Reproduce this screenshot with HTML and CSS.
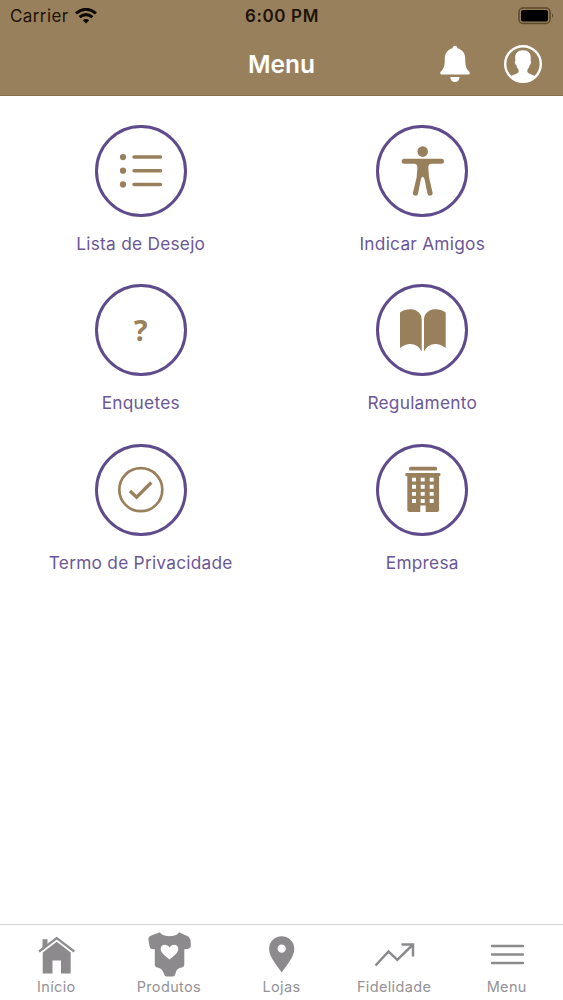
FILE: index.html
```html
<!DOCTYPE html>
<html lang="pt-BR">
<head>
  <meta charset="UTF-8" />
  <meta name="viewport" content="width=device-width, initial-scale=1.0"/>
  <title>Menu</title>
  <link rel="stylesheet" href="styles.css">
</head>
<body>
  <div id="container">
    <header class="header">
      <div class="status">
        <div class="carrier">
          <span>Carrier</span>
          <svg width="22" height="16" viewBox="0 0 22 16" fill="none" stroke="#0c0804" stroke-width="3">
            <path d="M1 5.3 Q11 -2.7 21 5.3" />
            <path d="M4.6 9.2 Q11 4 17.4 9.2" />
            <path d="M7.8 12.3 Q11 9.8 14.2 12.3 L11 15.5Z" fill="#0c0804" stroke="none" />
          </svg>
        </div>
        <span class="time">6:00 PM</span>
        <svg class="battery" width="37" height="18" viewBox="0 0 37 18">
          <rect x="1" y="1" width="31" height="15.5" rx="4" fill="none" stroke="#5b482a" stroke-width="1.5" />
          <rect x="3" y="3" width="27" height="11.5" rx="2" fill="#000" />
          <path d="M34 6.5 Q36.5 8.7 34 11Z" fill="#5b482a" />
        </svg>
      </div>
      <div class="title_bar">
        <h1>Menu</h1>
        <div class="actions">
          <svg width="30" height="38" viewBox="0 0 30 38" fill="#fff">
            <path d="M15 .8c1.5 0 2.4 1 2.4 2.4 5 1.3 7.8 5.2 7.8 10.3 0 7.5.9 10.3 4.1 13.2.9.9.5 2.7-1 2.7H1.7c-1.5 0-1.9-1.8-1-2.7 3.2-2.9 4.1-5.7 4.1-13.2 0-5.1 2.8-9 7.8-10.3C12.6 1.8 13.5.8 15 .8z" />
            <path d="M10.3 32h9.2c0 3-1.9 5-4.6 5s-4.6-2-4.6-5z" />
          </svg>
          <svg width="38" height="38" viewBox="0 0 38 38">
            <circle cx="19" cy="19" r="17.8" fill="none" stroke="#fff" stroke-width="2.4" />
            <path d="M19 5.2c5.2 0 8.200 3 7.8 8.500l-.2 2c.9.3.5 3.7-.9 4.300-.4 2.200-1.300 3.500-2.300 4.500v2.500c1.200 2 4.800 2.300 8.100 4.300C28.600 34.800 24 37 19 37S9.400 34.800 6.500 31.300c3.300-2 6.900-2.300 8.100-4.300v-2.500c-1-1-1.900-2.300-2.300-4.500-1.400-.6-1.800-4-.9-4.300l-.2-2c-.4-5.500 2.600-8.500 7.800-8.500z" fill="#fff" />
          </svg>
        </div>
      </div>
    </header>

    <main class="menu">
      <div class="item">
        <div class="circle">
          <svg viewBox="3 3 86 86" stroke="#99805c" stroke-width="3.5" stroke-linecap="round">
            <path d="M39 32.1H65.500M39 45.700H65.500M39 59.400H65.500" />
            <g fill="#99805c" stroke="none">
              <circle cx="28" cy="32.1" r="3.1" />
              <circle cx="28" cy="45.7" r="3.1" />
              <circle cx="28" cy="59.4" r="3.1" />
            </g>
          </svg>
        </div>
        <p>Lista de Desejo</p>
      </div>
      <div class="item">
        <div class="circle">
          <svg viewBox="3 3 86 86" fill="#99805c">
            <circle cx="46.700" cy="26.600" r="5.300" />
            <path d="M28.200 33.700H65.500a2.500 2.500 0 0 1 0 5H55.500Q52.300 39 52.300 42.500L53 52 56.500 67.500a2.500 2.500 0 0 1-5 1.200L48.500 54Q46.700 49.500 45 54L42 68.700a2.500 2.500 0 0 1-5-1.200L40.700 52 41.400 42.500Q41.400 39 38 38.700H28.200a2.500 2.500 0 0 1 0-5z" />
          </svg>
        </div>
        <p>Indicar Amigos</p>
      </div>
      <div class="item">
        <div class="circle"><b>?</b></div>
        <p>Enquetes</p>
      </div>
      <div class="item">
        <div class="circle">
          <svg viewBox="3 3 86 86" fill="#99805c">
            <path d="M24 64V28.500C29 24.700 36 24.600 40 26.500Q45.700 29.500 45.700 35V67.500C42 59.500 32.500 57 24 64z" />
            <path d="M69.700 64V28.500C64.700 24.700 57.700 24.600 53.700 26.500Q48 29.500 48 35V67.500C51.700 59.500 61.200 57 69.700 64z" />
          </svg>
        </div>
        <p>Regulamento</p>
      </div>
      <div class="item">
        <div class="circle">
          <svg viewBox="3 3 86 86" fill="none" stroke="#99805c">
            <circle cx="45.8" cy="45.7" r="21.5" stroke-width="2.7" />
            <path d="M35 47L41.600 53.200 56.300 38.500" stroke-width="3.3" />
          </svg>
        </div>
        <p>Termo de Privacidade</p>
      </div>
      <div class="item">
        <div class="circle">
          <svg viewBox="3 3 86 86" fill="#99805c">
            <rect x="33" y="22.700" width="28.200" height="3.900" rx="1.700" />
            <path d="M30.500 29h32.300a1.600 1.600 0 0 1 .3 3.200V66a2 2 0 0 1-2 2H49.700v-6.500h-5.400V68H33.300a2 2 0 0 1-2-2V32.200A1.600 1.600 0 0 1 30.500 29z" />
            <path d="M38 33.700v26M46.700 33.700v26M55.700 33.700v26" stroke="#fff" stroke-width="4" stroke-dasharray="3.9 3.2" />
          </svg>
        </div>
        <p>Empresa</p>
      </div>
    </main>

    <nav class="tabs">
      <div class="tab">
        <svg width="38" height="46" viewBox="0 1 38 46" fill="#8c8a8d">
          <path d="M5.500 19.500V8.200h5v6.300z" />
          <path d="M2 20.500L19.700 7.200 37.300 20.500" fill="none" stroke="#8c8a8d" stroke-width="2.2" />
          <path d="M5.700 21.500L19.700 10.700 33.700 21.500V42.500H24V29.500H15.500V42.500H5.700z" />
        </svg>
        <span>Início</span>
      </div>
      <div class="tab">
        <svg width="44" height="46" viewBox="-.5 1 44 46">
          <path d="M12.500 1.300C15 6.500 29 6.500 31.500 1.300L38 4.200Q42 5.500 43 9L43.300 14.500Q43.300 17.500 40 18L36.800 18.200V33.500Q37 35.500 35 36.200 28.500 37 27.800 43 27 45.500 25.500 45.500H19Q17.300 45.500 16.500 43 15 37 9 36.200 7.200 35.500 7.300 33.500V18.200L4 18Q2.500 17.800 2 15L.8 8Q1.200 5 5 4z" fill="#8c8a8d" />
          <path d="M22 28.500C18 25 13.200 22 13.200 18c0-5 6.500-5.500 8.800-1.500 2.300-4 8.800-3.500 8.800 1.500 0 4-4.800 7-8.800 10.500z" fill="#fff" />
        </svg>
        <span>Produtos</span>
      </div>
      <div class="tab">
        <svg width="28" height="46" viewBox="0 1 28 46">
          <path d="M14.700 5.200c7 0 12.600 5.500 12.600 12.500 0 8-7.800 17-12.600 23.700C9.900 34.700 2.100 25.700 2.100 17.700c0-7 5.600-12.500 12.600-12.500zm0 8.200a4.200 4.200 0 1 0 0 8.400 4.200 4.200 0 0 0 0-8.400z" fill="#8c8a8d" />
        </svg>
        <span>Lojas</span>
      </div>
      <div class="tab">
        <svg width="42" height="46" viewBox="0 1 42 46" fill="none" stroke="#8c8a8d" stroke-width="2.5">
          <path d="M2.500 34.500L15.500 20.500 24.300 28.800 40 13.500" />
          <path d="M28.500 13.500H40V25.500" />
        </svg>
        <span>Fidelidade</span>
      </div>
      <div class="tab">
        <svg width="34" height="46" viewBox="0 1 34 46" stroke="#8c8a8d" stroke-width="2.4" stroke-linecap="round">
          <path d="M2 15H33M2 23.500H33M2 32H33" />
        </svg>
        <span>Menu</span>
      </div>
    </nav>
  </div>
</body>
</html>
```
FILE: styles.css
```css
* {
  box-sizing: border-box;
  margin: 0;
  padding: 0;
}

body {
  font-family: Inter, Roboto, sans-serif;
  background-color: white;
}

#container {
  height: 100vh;
  min-height: 1000px;
  display: flex;
  flex-direction: column;
}

.header {
  height: 96px;
  background-color: #99805c;
  border-bottom: 1px solid #8a6d4a;
}

.status {
  height: 31px;
  display: grid;
  grid-template-columns: 1fr auto 1fr;
  align-items: center;
  padding: 0 9px 0 10px;
  font-size: 17px;
  color: #1c1208;
}

.carrier {
  display: flex;
  align-items: center;
  gap: 6px;
  letter-spacing: 0.4px;
}

.time {
  font-weight: 600;
  letter-spacing: 0.6px;
}

.battery {
  justify-self: end;
  margin-right: -1px;
}

.title_bar {
  height: 65px;
  display: grid;
  grid-template-columns: 1fr auto 1fr;
  align-items: center;
}

.title_bar h1 {
  grid-column: 2;
  font-size: 24.5px;
  font-weight: 600;
  color: white;
}

.actions {
  display: flex;
  align-items: center;
  justify-content: flex-end;
  gap: 34px;
  padding-right: 21px;
}

.menu {
  flex: 1;
  display: grid;
  grid-template-columns: 1fr 1fr;
  grid-auto-rows: 159.7px;
  padding-top: 28.5px;
}

.item {
  display: flex;
  flex-direction: column;
  align-items: center;
}

.circle {
  width: 92px;
  height: 92px;
  border: 3px solid #5f4b8b;
  border-radius: 50%;
  display: flex;
  align-items: center;
  justify-content: center;
}

.circle svg {
  width: 86px;
  height: 86px;
}

.circle b {
  font-family: "Noto Sans", sans-serif;
  font-size: 29px;
  line-height: 36px;
  color: #99805c;
}

.item p {
  margin-top: 16px;
  font-size: 17.3px;
  line-height: 22px;
  letter-spacing: 0.25px;
  color: #6b5797;
}

.tabs {
  height: 76px;
  display: grid;
  grid-template-columns: repeat(5, 1fr);
  border-top: 1px solid #d5d5d5;
  padding-top: 7px;
}

.tab {
  display: flex;
  flex-direction: column;
  align-items: center;
}

.tab span {
  font-size: 14.5px;
  line-height: 18px;
  letter-spacing: 0.35px;
  color: #949296;
}
```
